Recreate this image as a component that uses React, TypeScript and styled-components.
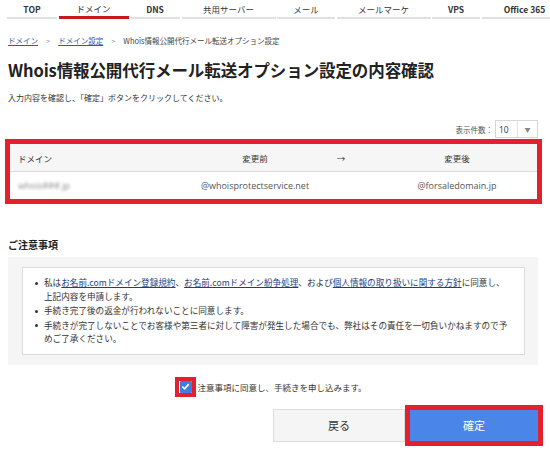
import styled, { createGlobalStyle } from 'styled-components';

const GlobalStyle = createGlobalStyle`
  html, body {
    margin: 0;
    padding: 0;
    background: #fff;
    overflow-x: hidden;
  }
  body {
    font-family: "Noto Sans CJK JP", "Noto Sans", sans-serif;
    color: #333;
  }
`;

const Page = styled.div`
  width: 550px;
  overflow: hidden;
`;

const Nav = styled.nav`
  display: flex;
  column-gap: 1.5px;
  padding-left: 7px;
  width: 600px;
`;

const Tab = styled.div<{ $w: number; $active?: boolean; $bold?: boolean }>`
  flex: 0 0 ${({ $w }) => $w}px;
  height: 17px;
  display: flex;
  align-items: center;
  justify-content: center;
  font-size: 8.5px;
  font-weight: ${({ $bold }) => ($bold ? 700 : 400)};
  color: #333;
  border-bottom: 2px solid ${({ $active }) => ($active ? '#c8161d' : '#e0e0e0')};
  ${({ $active }) => $active && 'height: 16px; border-bottom-width: 3px;'}
`;

const Main = styled.main`
  padding: 0 8px;
`;

const Breadcrumb = styled.div`
  margin-top: 16px;
  display: flex;
  align-items: center;
  column-gap: 8px;
  font-size: 7.5px;
  line-height: 12px;
  color: #444;
`;

const CrumbLink = styled.a`
  color: #2a5caa;
  text-decoration: underline;
`;

const CrumbSep = styled.span`
  color: #999;
`;

const Title = styled.h1`
  margin: 12px 0 0;
  font-size: 16.5px;
  line-height: 22px;
  font-weight: 700;
  color: #222;
  letter-spacing: -0.1px;
`;

const Lead = styled.p`
  margin: 11px 0 0;
  font-size: 8px;
  line-height: 12px;
  color: #333;
`;

const PerPageRow = styled.div`
  margin: 16px 4px 0 0;
  display: flex;
  justify-content: flex-end;
  align-items: center;
  column-gap: 2px;
  font-size: 7.5px;
  color: #555;
`;

const SelectBox = styled.div`
  width: 41px;
  height: 16px;
  border: 1px solid #d6d6d6;
  display: flex;
  align-items: center;
  font-family: "Open Sans", "Noto Sans CJK JP", sans-serif;
  font-size: 8.5px;
  color: #333;
`;

const SelectValue = styled.span`
  flex: 1;
  padding-left: 3px;
`;

const SelectArrow = styled.span`
  width: 19px;
  height: 100%;
  border-left: 1px solid #e2e2e2;
  display: flex;
  align-items: center;
  justify-content: center;
  font-size: 6px;
  color: #888;
`;

const TableFrame = styled.div`
  margin: 1px 0 0 -3px;
  border: 5px solid #e3202b;
`;

const Grid = styled.div<{ $head?: boolean }>`
  display: grid;
  grid-template-columns: 165px 160px 12px 1fr;
  align-items: center;
  height: ${({ $head }) => ($head ? 27 : 27)}px;
  background: ${({ $head }) => ($head ? '#f6f6f6' : '#fff')};
  border-bottom: ${({ $head }) => ($head ? '1px solid #dcdcdc' : 'none')};
  font-size: ${({ $head }) => ($head ? 8.5 : 9)}px;
  color: ${({ $head }) => ($head ? '#333' : '#555')};
`;

const Cell = styled.div<{ $align?: 'left' | 'center'; $shift?: number }>`
  text-align: ${({ $align }) => $align ?? 'center'};
  padding-left: ${({ $align, $shift }) => ($align === 'left' ? 8 : $shift ?? 0)}px;
  white-space: nowrap;
`;

const MailCell = styled(Cell)`
  font-family: "Open Sans", "Noto Sans CJK JP", sans-serif;
`;

const Blurred = styled.span`
  filter: blur(1.4px);
  color: #888;
  font-family: "Open Sans", sans-serif;
`;

const NoteHeading = styled.h2`
  margin: 34px 0 0;
  font-size: 10px;
  line-height: 14px;
  font-weight: 700;
  color: #222;
`;

const NoteOuter = styled.div`
  margin: 5px 4px 0 0;
  background: #f5f5f5;
  padding: 10px 13px 10px 14px;
`;

const NoteInner = styled.ul`
  margin: 0;
  background: #fff;
  border: 1px solid #dcdcdc;
  padding: 8px 0 8px 21px;
  list-style: none;
  font-size: 8.6px;
  line-height: 13.5px;
  color: #333;
`;

const NoteItem = styled.li`
  position: relative;
  white-space: nowrap;
  & + & {
    margin-top: 1px;
  }
  &::before {
    content: '';
    position: absolute;
    left: -9px;
    top: 5.5px;
    width: 3px;
    height: 3px;
    border-radius: 50%;
    background: #333;
  }
`;

const NoteLink = styled.a`
  color: #1c3f85;
  text-decoration: underline;
`;

const AgreeRow = styled.div`
  margin-top: 12px;
  display: flex;
  justify-content: center;
  align-items: center;
  column-gap: 1px;
  padding-right: 8px;
  font-size: 8.5px;
  color: #333;
`;

const CheckFrame = styled.span`
  width: 13px;
  height: 12px;
  border: 4px solid #e3202b;
  display: flex;
  align-items: center;
  justify-content: center;
`;

const CheckBox = styled.span`
  width: 12px;
  height: 12px;
  border-radius: 1px;
  background: #3d7fe0;
  display: flex;
  align-items: center;
  justify-content: center;
`;

const ButtonRow = styled.div`
  margin: 8px -1px 0 0;
  display: flex;
  justify-content: flex-end;
  align-items: center;
`;

const BackButton = styled.button`
  width: 132px;
  height: 33px;
  background: #f5f5f5;
  border: 1px solid #dcdcdc;
  font-family: inherit;
  font-size: 11px;
  color: #333;
`;

const ConfirmFrame = styled.div`
  border: 5px solid #e3202b;
`;

const ConfirmButton = styled.button`
  display: block;
  width: 128px;
  height: 31px;
  background: #4a86e8;
  border: none;
  font-family: inherit;
  font-size: 11px;
  color: #fff;
`;

const tabs: { label: string; w: number; bold?: boolean; active?: boolean }[] = [
  { label: 'TOP', w: 50, bold: true },
  { label: 'ドメイン', w: 70, active: true },
  { label: 'DNS', w: 50, bold: true },
  { label: '共用サーバー', w: 94 },
  { label: 'メール', w: 58 },
  { label: 'メールマーケ', w: 94 },
  { label: 'VPS', w: 48, bold: true },
  { label: 'Office 365', w: 86, bold: true },
];

export default function App() {
  return (
    <Page>
      <GlobalStyle />
      <Nav>
        {tabs.map(t => (
          <Tab key={t.label} $w={t.w} $bold={t.bold} $active={t.active}>
            {t.label}
          </Tab>
        ))}
      </Nav>
      <Main>
        <Breadcrumb>
          <CrumbLink>ドメイン</CrumbLink>
          <CrumbSep>&gt;</CrumbSep>
          <CrumbLink>ドメイン設定</CrumbLink>
          <CrumbSep>&gt;</CrumbSep>
          <span>Whois情報公開代行メール転送オプション設定</span>
        </Breadcrumb>
        <Title>Whois情報公開代行メール転送オプション設定の内容確認</Title>
        <Lead>入力内容を確認し、「確定」ボタンをクリックしてください。</Lead>

        <PerPageRow>
          表示件数：
          <SelectBox>
            <SelectValue>10</SelectValue>
            <SelectArrow>▼</SelectArrow>
          </SelectBox>
        </PerPageRow>

        <TableFrame>
          <Grid $head>
            <Cell $align="left">ドメイン</Cell>
            <Cell>変更前</Cell>
            <Cell>→</Cell>
            <Cell $shift={30}>変更後</Cell>
          </Grid>
          <Grid>
            <Cell $align="left">
              <Blurred>whois###.jp</Blurred>
            </Cell>
            <MailCell>@whoisprotectservice.net</MailCell>
            <Cell />
            <MailCell $shift={30}>@forsaledomain.jp</MailCell>
          </Grid>
        </TableFrame>

        <NoteHeading>ご注意事項</NoteHeading>
        <NoteOuter>
          <NoteInner>
            <NoteItem>
              私は<NoteLink>お名前.comドメイン登録規約</NoteLink>、
              <NoteLink>お名前.comドメイン紛争処理</NoteLink>、および
              <NoteLink>個人情報の取り扱いに関する方針</NoteLink>に同意し、
              <br />
              上記内容を申請します。
            </NoteItem>
            <NoteItem>手続き完了後の返金が行われないことに同意します。</NoteItem>
            <NoteItem>
              手続きが完了しないことでお客様や第三者に対して障害が発生した場合でも、弊社はその責任を一切負いかねますので予
              <br />
              めご了承ください。
            </NoteItem>
          </NoteInner>
        </NoteOuter>

        <AgreeRow>
          <CheckFrame>
            <CheckBox>
              <svg width="9" height="9" viewBox="0 0 10 10">
                <path d="M1.5 5.2 L4 7.6 L8.6 2.4" fill="none" stroke="#fff" strokeWidth="1.8" />
              </svg>
            </CheckBox>
          </CheckFrame>
          注意事項に同意し、手続きを申し込みます。
        </AgreeRow>

        <ButtonRow>
          <BackButton>戻る</BackButton>
          <ConfirmFrame>
            <ConfirmButton>確定</ConfirmButton>
          </ConfirmFrame>
        </ButtonRow>
      </Main>
    </Page>
  );
}
